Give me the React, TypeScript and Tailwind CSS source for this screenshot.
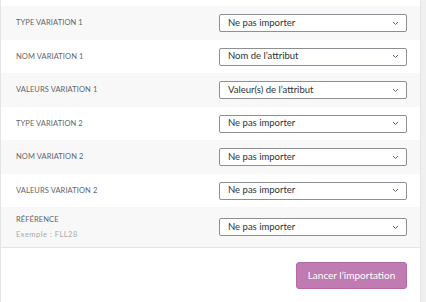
import React from "react";

const rows: { label: string; value: string; hint?: string; h: string }[] = [
  { label: "Type variation 1", value: "Ne pas importer", h: "h-[34px]" },
  { label: "Nom variation 1", value: "Nom de l’attribut", h: "h-[33px]" },
  { label: "Valeurs variation 1", value: "Valeur(s) de l’attribut", h: "h-[34px]" },
  { label: "Type variation 2", value: "Ne pas importer", h: "h-[33px]" },
  { label: "Nom variation 2", value: "Ne pas importer", h: "h-[34px]" },
  { label: "Valeurs variation 2", value: "Ne pas importer", h: "h-[33px]" },
  { label: "Référence", value: "Ne pas importer", hint: "Exemple : FLL28", h: "h-[40px]" },
];

function Chevron() {
  return (
    <svg width="7" height="5" viewBox="0 0 7 5" fill="none" className="shrink-0">
      <path d="M1 1l2.5 2.5L6 1" stroke="#646970" strokeWidth="1" />
    </svg>
  );
}

function SelectBox({ value }: { value: string }) {
  return (
    <div className="flex h-[18px] w-[188px] items-center justify-between rounded-[2px] border border-[#8c8f94] bg-white pl-[8px] pr-[7px] text-[9.5px] text-[#2c3338]">
      <span>{value}</span>
      <Chevron />
    </div>
  );
}

export default function App() {
  return (
    <div
      className="flex h-[302px] w-[426px] overflow-hidden bg-[#f0f0f1]"
      style={{ fontFamily: "Lato, 'Noto Sans', sans-serif" }}
    >
      <div className="flex w-[421px] flex-col border-x border-[#e2e4e7] bg-white">
        <div className="h-[6px] shrink-0" />
        {rows.map((row, i) => (
          <div
            key={row.label}
            className={
              "flex shrink-0 items-center " +
              row.h +
              " " +
              (i % 2 === 0 ? "bg-[#f8f8f8]" : "bg-white")
            }
          >
            <div className="w-[218px] shrink-0 pl-[15px]">
              <div className="text-[7.5px] uppercase leading-none tracking-[0.1px] text-[#5f656b]">{row.label}</div>
              {row.hint && (
                <div className="mt-[7px] text-[7.5px] leading-none tracking-[0.5px] text-[#a7aaad]">{row.hint}</div>
              )}
            </div>
            <SelectBox value={row.value} />
          </div>
        ))}
        <div className="flex justify-end border-t border-[#e2e4e7] pr-[13px] pt-[14px]">
          <button className="h-[27px] w-[111px] rounded-[3px] border border-[#b36aa6] bg-[#bf7bb2] text-[10px] text-white">
            Lancer l’importation
          </button>
        </div>
      </div>
    </div>
  );
}
